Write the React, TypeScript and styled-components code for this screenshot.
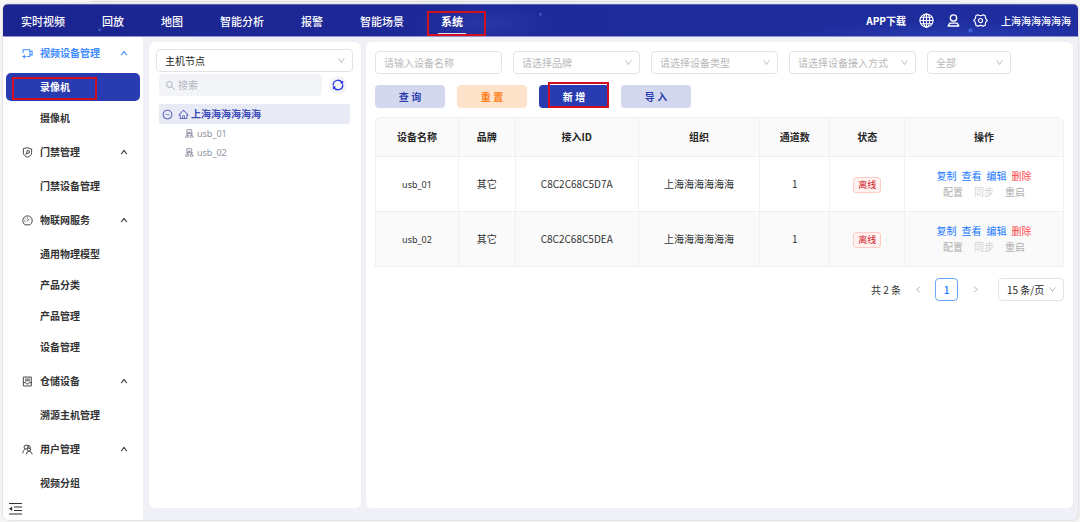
import React from "react";
import styled, { createGlobalStyle, css } from "styled-components";
import {
  AiOutlineDown,
  AiOutlineHome,
  AiOutlineLeft,
  AiOutlineMinusCircle,
  AiOutlineRight,
  AiOutlineSearch,
  AiOutlineUp,
} from "react-icons/ai";

const GlobalStyle = createGlobalStyle`
  *, *::before, *::after { box-sizing: border-box; }
  body {
    margin: 0;
    background: #f5f5f5;
    color: #262626;
    font-family: "Noto Sans CJK SC", "Noto Sans", sans-serif;
    font-size: 10px;
    line-height: 16px;
  }
  button, input, select { font: inherit; color: inherit; margin: 0; }
  button { cursor: pointer; border: 0; padding: 0; background: none; }
  a { color: inherit; text-decoration: none; }
  ul { list-style: none; margin: 0; padding: 0; }
  svg { display: block; flex: none; }
`;

/* ---------- frame ---------- */

const Page = styled.div`
  min-height: 100vh;
  display: flex;
  flex-direction: column;
  padding: 0 2px 2px 3px;
`;

const TopEdge = styled.div`
  height: 4px;
  &::before {
    content: "";
    display: block;
    height: 2px;
    margin: 0 11% 0 8%;
    border-bottom: 1px solid #dcdcdf;
    border-radius: 0 0 4px 4px;
  }
`;

const Frame = styled.div`
  flex: 1;
  display: flex;
  flex-direction: column;
  border-radius: 5px;
  overflow: hidden;
  background: #f0f1f6;
  box-shadow: 0 0 2px rgba(0, 0, 0, 0.25);
`;

const TopBar = styled.header`
  position: relative;
  height: 32px;
  display: flex;
  align-items: center;
  justify-content: space-between;
  padding: 0 7px 0 18px;
  color: #fff;
  border-top: 1px solid #5a63b4;
  box-shadow: 0 1px 0 #8f96cf;
  background:
    radial-gradient(circle at 9% 80%, #3a55c8 0 1px, transparent 2px),
    radial-gradient(circle at 50% 30%, #3850c0 0 1px, transparent 2px),
    radial-gradient(circle at 90% 82%, #3f62dc 0 1px, transparent 3px),
    radial-gradient(ellipse 70px 20px at 45% 60%, rgba(66, 82, 190, 0.3), transparent),
    radial-gradient(ellipse 160px 16px at 88% 100%, rgba(48, 72, 190, 0.5), transparent),
    linear-gradient(90deg, #1b2490, #1f2b9b 55%, #1e2d9f);
`;

const Nav = styled.nav`
  display: flex;
  gap: 37px;
  height: 100%;
`;

const NavLink = styled.a<{ $active?: boolean }>`
  position: relative;
  display: flex;
  align-items: center;
  font-size: 11px;
  font-weight: ${(p) => (p.$active ? 700 : 500)};
  ${(p) =>
    p.$active &&
    css`
      &::after {
        content: "";
        position: absolute;
        left: -3px;
        right: -3px;
        bottom: 2px;
        height: 1px;
        background: #dfe2f5;
      }
    `}
`;

const Marker = styled.span<{ $inset: string }>`
  position: absolute;
  inset: ${(p) => p.$inset};
  border: 2px solid #d3101f;
  pointer-events: none;
`;

const Tools = styled.div`
  display: flex;
  align-items: center;
  gap: 13px;
  font-weight: 500;
`;

const Download = styled.a`
  font-weight: 700;
`;

const IconButton = styled.button`
  display: flex;
`;

const Body = styled.div`
  flex: 1;
  display: flex;
`;

/* ---------- sidebar ---------- */

const Sidebar = styled.aside`
  width: 140px;
  flex: none;
  display: flex;
  flex-direction: column;
  background: #fff;
`;

const Menu = styled.ul`
  display: flex;
  flex-direction: column;
  gap: 3px;
  padding: 0 3px;
  font-weight: 700;
`;

const GroupButton = styled.button<{ $open?: boolean }>`
  width: 100%;
  height: 34px;
  display: grid;
  grid-template-columns: 18px 1fr 8px;
  align-items: center;
  padding: 0 12px 0 16px;
  text-align: left;
  color: ${(p) => (p.$open ? "#3d8bff" : "#333")};
`;

const ItemLink = styled.a<{ $active?: boolean }>`
  position: relative;
  height: 28px;
  display: flex;
  align-items: center;
  padding-left: 34px;
  border-radius: 5px;
  color: #333;
  ${(p) =>
    p.$active &&
    css`
      background: #293bb0;
      color: #fff;
    `}
`;

const Collapse = styled.button`
  display: flex;
  align-items: center;
  height: 22px;
  margin-top: auto;
  padding-left: 6px;
  align-self: flex-start;
`;

/* ---------- content ---------- */

const Content = styled.main`
  flex: 1;
  min-width: 0;
  display: flex;
  gap: 5px;
  padding: 6px 5px 12px 6px;
`;

const Card = styled.section`
  background: #fff;
  border-radius: 6px;
`;

const TreeCard = styled(Card)`
  width: 212px;
  flex: none;
  padding: 7px 8px 7px 7px;
`;

const MainCard = styled(Card)`
  flex: 1;
  min-width: 0;
  padding: 9px;
`;

const SelectBox = styled.span<{ $width?: string }>`
  position: relative;
  display: block;
  width: ${(p) => p.$width ?? "100%"};
  svg {
    position: absolute;
    right: 7px;
    top: 7px;
    color: #b4b4b4;
    pointer-events: none;
  }
`;

const fieldBox = css`
  width: 100%;
  height: 23px;
  padding: 0 8px;
  border: 1px solid #e3e3e6;
  border-radius: 4px;
  background: #fff;
  outline: none;
`;

const NativeSelect = styled.select<{ $muted?: boolean }>`
  ${fieldBox}
  display: block;
  appearance: none;
  color: ${(p) => (p.$muted ? "#b8b8b8" : "#262626")};
`;

const Field = styled.input`
  ${fieldBox}
  width: 127px;
  &::placeholder { color: #b8b8b8; opacity: 1; }
`;

const SearchRow = styled.div`
  display: flex;
  align-items: center;
  justify-content: space-between;
  margin: 2px 6px 8px 3px;
`;

const SearchBox = styled.label`
  width: 163px;
  height: 22px;
  display: flex;
  align-items: center;
  gap: 2px;
  padding: 0 6px;
  border-radius: 4px;
  background: #f3f4f8;
  color: #a3a6b4;
  input {
    width: 100%;
    border: 0;
    padding: 0;
    background: none;
    outline: none;
  }
  input::placeholder { color: #b3b6c0; opacity: 1; }
`;

const Refresh = styled.button`
  width: 18px;
  height: 18px;
  display: grid;
  place-items: center;
  border-radius: 50%;
  background: #f3f4f8;
`;

const TreeRoot = styled.div`
  height: 20px;
  display: flex;
  align-items: center;
  margin: 0 3px;
  padding-left: 3px;
  border-radius: 2px;
  background: #e8eaf6;
  color: #3a4ab6;
  font-weight: 700;
  svg + svg { margin: 0 2px 0 5px; }
`;

const TreeLeaf = styled.li`
  height: 19px;
  display: flex;
  align-items: center;
  gap: 3px;
  margin-left: 29px;
  color: #8f92a3;
`;

const Latin = styled.span`
  font-family: "Noto Sans", sans-serif;
  font-size: 9px;
`;

const Filters = styled.div`
  display: flex;
  flex-wrap: wrap;
  gap: 11px;
`;

const Actions = styled.div`
  display: flex;
  gap: 12px;
  margin: 11px 0 9px;
`;

const tones = {
  soft: ["#d4d8ee", "#2c3eb1"],
  warm: ["#ffe2ca", "#ff7d14"],
  solid: ["#293bb0", "#ffffff"],
};

const ActionButton = styled.button<{ $tone: keyof typeof tones }>`
  position: relative;
  width: 70px;
  height: 23px;
  border-radius: 4px;
  background: ${(p) => tones[p.$tone][0]};
  color: ${(p) => tones[p.$tone][1]};
  font-weight: 700;
`;

const Table = styled.table`
  width: 100%;
  table-layout: fixed;
  border-collapse: separate;
  border-spacing: 0;
  border-top: 1px solid #f0f0f0;
  border-left: 1px solid #f0f0f0;
  border-radius: 6px 6px 0 0;
  text-align: center;
  th, td {
    padding: 0;
    border-right: 1px solid #f0f0f0;
    border-bottom: 1px solid #f0f0f0;
  }
  th {
    height: 39px;
    background: #fafafa;
    font-weight: 700;
  }
  th:first-child { border-top-left-radius: 6px; }
  th:last-child { border-top-right-radius: 6px; }
  td { height: 55px; color: #333; }
  tbody tr:nth-child(even) { background: #fafafa; }
`;

const Tag = styled.span`
  display: inline-block;
  height: 16px;
  line-height: 14px;
  padding: 0 4px;
  border: 1px solid #ffccc7;
  border-radius: 3px;
  background: #fff1f0;
  color: #cf1322;
  font-size: 9px;
  vertical-align: middle;
`;

const Ops = styled.div<{ $gap: number }>`
  display: flex;
  justify-content: center;
  gap: ${(p) => p.$gap}px;
`;

const OpButton = styled.button<{ $color: string }>`
  color: ${(p) => p.$color};
`;

const Pager = styled.nav`
  display: flex;
  align-items: center;
  justify-content: flex-end;
  margin-top: 11px;
  color: #333;
`;

const Arrow = styled.button`
  width: 34px;
  display: grid;
  place-items: center;
  color: #b4b4b4;
`;

const PageButton = styled.button`
  width: 23px;
  height: 23px;
  border: 1px solid #69a8ff;
  border-radius: 4px;
  color: #1677ff;
  font-weight: 500;
`;

const PageSize = styled.div`
  margin-left: 6px;
`;

/* ---------- drawings ---------- */

type DrawProps = { size: number; box?: number; w?: number; children: React.ReactNode };
const Draw = ({ size, box = 16, w = 1.3, children }: DrawProps) => (
  <svg
    width={size}
    height={size}
    viewBox={`0 0 ${box} ${box}`}
    fill="none"
    stroke="currentColor"
    strokeWidth={w}
    strokeLinecap="round"
    strokeLinejoin="round"
    aria-hidden="true"
  >
    {children}
  </svg>
);

const CameraIcon = () => (
  <Draw size={11} w={1.5}>
    <path d="M1.500 7V2.500H11.500V12.500H8M1 12.500h4.500M3.200 10.300v4.400M11.500 5.500l3.200-1.200v6.400l-3.200-1.200" />
  </Draw>
);
const ShieldIcon = () => (
  <Draw size={11}>
    <path d="M8 1.200 14 3v5.500c0 3-2.600 5-6 6.300C4.600 13.500 2 11.500 2 8.500V3z" />
    <path d="M6 10.800 7 7.500a2 2 0 1 1 1.700 1.600L7 9.300" />
  </Draw>
);
const GaugeIcon = () => (
  <Draw size={11}>
    <path d="M4 14a7 7 0 1 1 8 0z" />
    <path d="m7.500 9 3-3M3.800 8.500h.6M8 4v.5M5 5.400l.4.400" />
  </Draw>
);
const StoreIcon = () => (
  <Draw size={11}>
    <path d="M2.500 1.500h11v13h-11zM5 4.500h6M5 7h6M2.500 9.500h2.500l1.500 2h3l1.500-2h2.500" />
  </Draw>
);
const UsersIcon = () => (
  <Draw size={11}>
    <circle cx="6" cy="4.500" r="3" />
    <path d="M1.200 13c.3-3 1.600-4.500 3.600-5.500M9 2a2.800 2.800 0 0 1 2.500 4.500" />
    <circle cx="10.200" cy="8.200" r="2.300" />
    <path d="M6.500 14.500c.4-2.500 1.500-3.800 3.700-3.900 2.200.1 4 1.400 4.500 3.900" />
  </Draw>
);
const GlobeIcon = () => (
  <Draw size={15} w={1.2}>
    <circle cx="8" cy="8" r="7" />
    <ellipse cx="8" cy="8" rx="3.400" ry="7" />
    <path d="M8 1v14M1 8h14M2 4.500h12M2 11.500h12" />
  </Draw>
);
const UserIcon = () => (
  <Draw size={13} w={1.7}>
    <circle cx="8" cy="5" r="3.900" />
    <path d="M3.500 11.200h9l2 3.500h-13z" />
  </Draw>
);
const GearIcon = () => (
  <Draw size={15} w={1.2}>
    <path d="M5.200 1.800c1.700 1.300 3.900 1.300 5.600 0l2.400 1.400c-.3 2.100.8 4 2.100 4.800-1.300.8-2.400 2.700-2.100 4.800l-2.400 1.400c-1.700-1.300-3.900-1.300-5.600 0l-2.400-1.400C3.100 10.700 2 8.800.7 8 2 7.200 3.100 5.300 2.800 3.200z" />
    <circle cx="8" cy="8" r="2.200" />
  </Draw>
);
const RefreshIcon = () => (
  <svg width="12" height="12" viewBox="0 0 16 16" fill="none" stroke="#2b35e8" strokeWidth="1.700" aria-hidden="true">
    <path d="M1.800 8.800A6.200 6.200 0 0 1 13.500 5.200M14.200 7.200A6.200 6.200 0 0 1 2.500 10.800" />
    <path d="M14 2.500v3h-2.500M2 13.500v-3h2.500" />
  </svg>
);
const HostIcon = () => (
  <Draw size={9} w={1.6}>
    <path d="M4 1.200h8v4.600H4zM2.500 8.200h11M8 5.800v2.400M4.500 8.200v2.800M11.500 8.200v2.800" />
    <path d="M3 11h3v3.500H1.500zM10 11h3l1.500 3.500H10z" />
  </Draw>
);
const FoldIcon = () => (
  <svg width="13" height="12" viewBox="0 0 13 12" aria-hidden="true">
    <path d="M0 .5h13M5 4h8M5 7.500h8M0 11h13" stroke="#333" strokeWidth="1.200" />
    <path d="M0 5.750 3.200 3.500v4.500z" fill="#333" />
  </svg>
);

/* ---------- data ---------- */

const NAV = ["实时视频", "回放", "地图", "智能分析", "报警", "智能场景", "系统"];

const MENU = [
  { title: "视频设备管理", icon: <CameraIcon />, items: ["录像机", "摄像机"] },
  { title: "门禁管理", icon: <ShieldIcon />, items: ["门禁设备管理"] },
  { title: "物联网服务", icon: <GaugeIcon />, items: ["通用物理模型", "产品分类", "产品管理", "设备管理"] },
  { title: "仓储设备", icon: <StoreIcon />, items: ["溯源主机管理"] },
  { title: "用户管理", icon: <UsersIcon />, items: ["视频分组"] },
];

const COLUMNS: [string, number][] = [
  ["设备名称", 83],
  ["品牌", 57],
  ["接入ID", 123],
  ["组织", 122],
  ["通道数", 70],
  ["状态", 75],
  ["操作", 159],
];
const TOTAL = COLUMNS.reduce((sum, c) => sum + c[1], 0);

const ROWS = [
  { name: "usb_01", id: "C8C2C68C5D7A" },
  { name: "usb_02", id: "C8C2C68C5DEA" },
];

type DropProps = { label: string; value: string; width?: string; muted?: boolean };
const Drop = ({ label, value, width, muted }: DropProps) => (
  <SelectBox $width={width}>
    <NativeSelect aria-label={label} $muted={muted}>
      <option>{value}</option>
    </NativeSelect>
    <AiOutlineDown size={9} />
  </SelectBox>
);

export default function App() {
  return (
    <Page>
      <GlobalStyle />
      <TopEdge />
      <Frame>
        <TopBar>
          <Nav>
            {NAV.map((name) => {
              const active = name === "系统";
              return (
                <NavLink key={name} href="#" $active={active}>
                  {name}
                  {active && <Marker $inset="6px -23px 0 -14px" />}
                </NavLink>
              );
            })}
          </Nav>
          <Tools>
            <Download href="#">APP下载</Download>
            <IconButton aria-label="语言"><GlobeIcon /></IconButton>
            <IconButton aria-label="用户"><UserIcon /></IconButton>
            <IconButton aria-label="设置"><GearIcon /></IconButton>
            <span>上海海海海海海</span>
          </Tools>
        </TopBar>
        <Body>
          <Sidebar>
            <Menu>
              {MENU.map((group, g) => (
                <React.Fragment key={group.title}>
                  <li>
                    <GroupButton $open={g === 0}>
                      {group.icon}
                      {group.title}
                      <AiOutlineUp size={8} stroke="currentColor" strokeWidth={60} />
                    </GroupButton>
                  </li>
                  {group.items.map((item) => {
                    const active = item === "录像机";
                    return (
                      <li key={item}>
                        <ItemLink href="#" $active={active}>
                          {item}
                          {active && <Marker $inset="4px 43px 1px 6px" />}
                        </ItemLink>
                      </li>
                    );
                  })}
                </React.Fragment>
              ))}
            </Menu>
            <Collapse aria-label="收起菜单"><FoldIcon /></Collapse>
          </Sidebar>
          <Content>
            <TreeCard>
              <Drop label="节点类型" value="主机节点" />
              <SearchRow>
                <SearchBox>
                  <AiOutlineSearch size={11} />
                  <input placeholder="搜索" aria-label="搜索" />
                </SearchBox>
                <Refresh aria-label="刷新"><RefreshIcon /></Refresh>
              </SearchRow>
              <TreeRoot>
                <AiOutlineMinusCircle size={11} />
                <AiOutlineHome size={11} />
                上海海海海海海
              </TreeRoot>
              <ul>
                {ROWS.map((row) => (
                  <TreeLeaf key={row.name}>
                    <HostIcon />
                    <Latin>{row.name}</Latin>
                  </TreeLeaf>
                ))}
              </ul>
            </TreeCard>
            <MainCard>
              <Filters>
                <Field placeholder="请输入设备名称" aria-label="设备名称" />
                <Drop label="品牌" value="请选择品牌" width="127px" muted />
                <Drop label="设备类型" value="请选择设备类型" width="127px" muted />
                <Drop label="设备接入方式" value="请选择设备接入方式" width="127px" muted />
                <Drop label="状态" value="全部" width="84px" muted />
              </Filters>
              <Actions>
                <ActionButton $tone="soft">查 询</ActionButton>
                <ActionButton $tone="warm">重 置</ActionButton>
                <ActionButton $tone="solid">
                  新 增
                  <Marker $inset="-3px 0 0 9px" />
                </ActionButton>
                <ActionButton $tone="soft">导 入</ActionButton>
              </Actions>
              <Table>
                <colgroup>
                  {COLUMNS.map(([name, w]) => (
                    <col key={name} style={{ width: `${(w / TOTAL) * 100}%` }} />
                  ))}
                </colgroup>
                <thead>
                  <tr>
                    {COLUMNS.map(([name]) => (
                      <th key={name} scope="col">{name}</th>
                    ))}
                  </tr>
                </thead>
                <tbody>
                  {ROWS.map((row) => (
                    <tr key={row.id}>
                      <td><Latin>{row.name}</Latin></td>
                      <td>其它</td>
                      <td>{row.id}</td>
                      <td>上海海海海海海</td>
                      <td>1</td>
                      <td><Tag>离线</Tag></td>
                      <td>
                        <Ops $gap={5}>
                          <OpButton $color="#1677ff">复制</OpButton>
                          <OpButton $color="#1677ff">查看</OpButton>
                          <OpButton $color="#1677ff">编辑</OpButton>
                          <OpButton $color="#ff4d4f">删除</OpButton>
                        </Ops>
                        <Ops $gap={11}>
                          <OpButton $color="#b0b0b0">配置</OpButton>
                          <OpButton $color="#d0d0d0">同步</OpButton>
                          <OpButton $color="#b0b0b0">重启</OpButton>
                        </Ops>
                      </td>
                    </tr>
                  ))}
                </tbody>
              </Table>
              <Pager aria-label="分页">
                <span>共 2 条</span>
                <Arrow aria-label="上一页"><AiOutlineLeft size={9} /></Arrow>
                <PageButton>1</PageButton>
                <Arrow aria-label="下一页"><AiOutlineRight size={9} /></Arrow>
                <PageSize>
                  <Drop label="每页条数" value="15 条/页" width="66px" />
                </PageSize>
              </Pager>
            </MainCard>
          </Content>
        </Body>
      </Frame>
    </Page>
  );
}
